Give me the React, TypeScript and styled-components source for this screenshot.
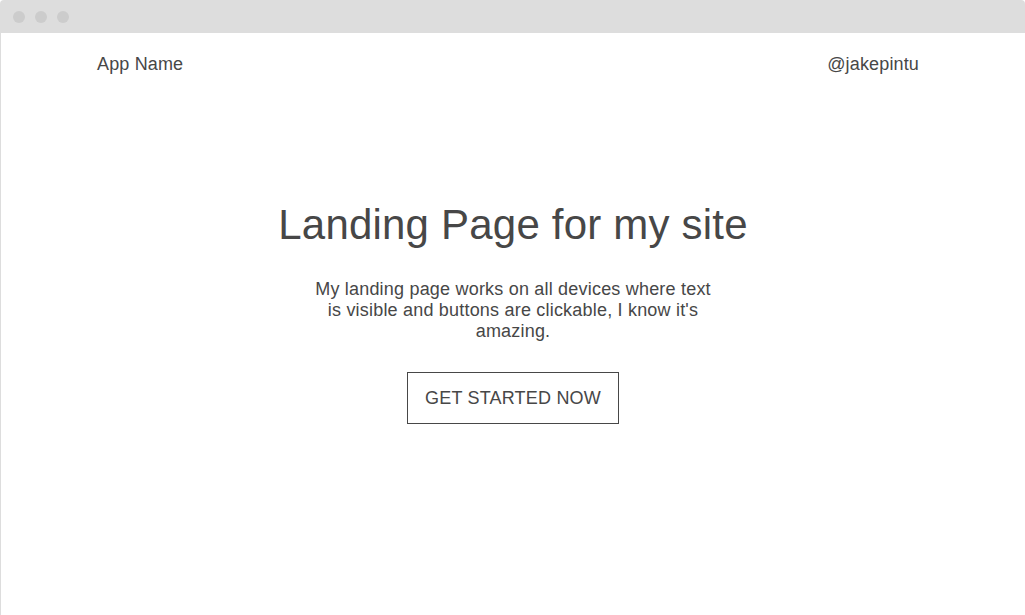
import React from 'react'
import styled, { createGlobalStyle } from 'styled-components'

const GlobalStyle = createGlobalStyle`
  html, body {
    margin: 0;
    padding: 0;
    background: #ffffff;
  }
  body {
    font-family: "Liberation Sans", Arial, sans-serif;
    color: #474747;
  }
`

// =============================================================================
// BROWSER FRAME
// =============================================================================

const Frame = styled.div`
  display: flex;
  flex-direction: column;
  width: 1025px;
  height: 615px;
  box-sizing: border-box;
  overflow: hidden;
`

const TitleBar = styled.div`
  display: flex;
  align-items: center;
  gap: 10px;
  height: 33px;
  padding-left: 13px;
  background: #dddddd;
  border-radius: 4px 4px 0 0;
  flex-shrink: 0;
`

const WindowDot = styled.span`
  width: 12px;
  height: 12px;
  border-radius: 50%;
  background: #cccccc;
`

const Viewport = styled.div`
  flex: 1;
  display: flex;
  flex-direction: column;
  border-left: 1px solid #dddddd;
  background: #ffffff;
`

// =============================================================================
// NAV
// =============================================================================

const Nav = styled.nav`
  display: flex;
  justify-content: space-between;
  align-items: center;
  padding: 20px 106px 0 96px;
  height: 22px;
`

const NavText = styled.span`
  font-size: 18px;
  line-height: 22px;
  letter-spacing: 0.15px;
  color: #474747;
`

// =============================================================================
// HERO
// =============================================================================

const Hero = styled.section`
  display: flex;
  flex-direction: column;
  align-items: center;
  text-align: center;
  padding-top: 126px;
`

const Title = styled.h1`
  margin: 0;
  font-size: 42px;
  font-weight: 400;
  line-height: 48px;
  letter-spacing: 0.2px;
  color: #474747;
`

const Lead = styled.p`
  margin: 30px 0 0;
  max-width: 402px;
  font-size: 18px;
  line-height: 21px;
  letter-spacing: 0.2px;
  color: #474747;
`

const CtaButton = styled.button`
  margin-top: 30px;
  padding: 15px 17px;
  font-family: inherit;
  font-size: 18px;
  line-height: 20px;
  letter-spacing: 0.2px;
  text-transform: uppercase;
  color: #474747;
  background: transparent;
  border: 1px solid #474747;
  border-radius: 0;
  cursor: pointer;
`

export default function App() {
  return (
    <>
      <GlobalStyle />
      <Frame>
        <TitleBar>
          <WindowDot />
          <WindowDot />
          <WindowDot />
        </TitleBar>
        <Viewport>
          <Nav>
            <NavText>App Name</NavText>
            <NavText>@jakepintu</NavText>
          </Nav>
          <Hero>
            <Title>Landing Page for my site</Title>
            <Lead>
              My landing page works on all devices where text is visible and buttons are clickable, I
              know it's amazing.
            </Lead>
            <CtaButton>Get started now</CtaButton>
          </Hero>
        </Viewport>
      </Frame>
    </>
  )
}
